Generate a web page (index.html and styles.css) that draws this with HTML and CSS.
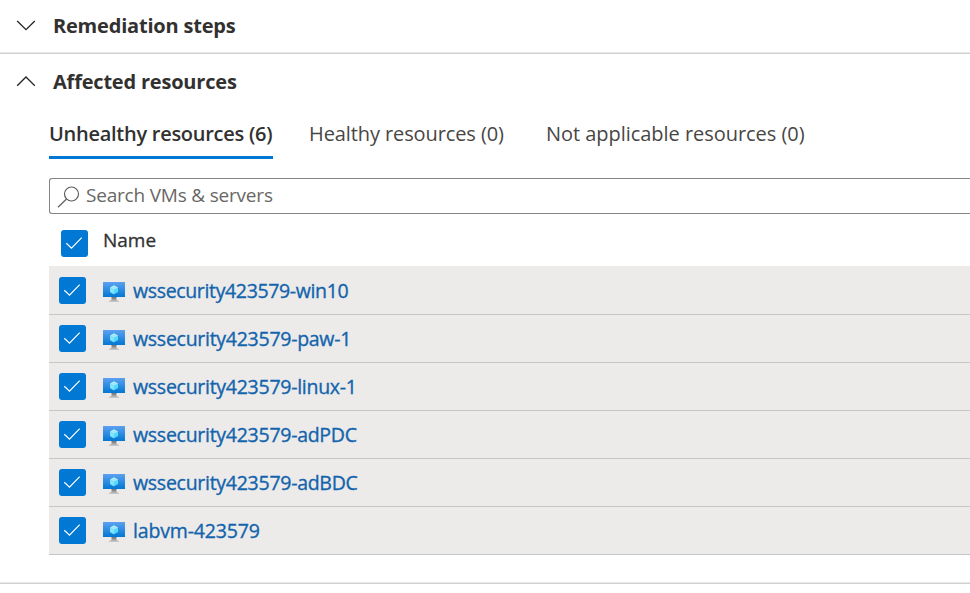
FILE: index.html
```
<!DOCTYPE html>
<html lang="en">
<head>
<meta charset="utf-8">
<title>Affected resources</title>
<link rel="stylesheet" href="styles.css">
</head>
<body>
<svg class="defs" width="0" height="0" aria-hidden="true">
  <defs>
    <linearGradient id="screen" x1="0" y1="0" x2="0" y2="1"><stop offset="0" stop-color="#5ea0ef"/><stop offset="1" stop-color="#0078d4"/></linearGradient>
    <linearGradient id="stand" x1="0" y1="0" x2="0" y2="1"><stop offset="0" stop-color="#707070"/><stop offset="1" stop-color="#cfcfcf"/></linearGradient>
    <symbol id="vm" viewBox="0 0 22 22">
      <rect y="1" width="22" height="15" fill="url(#screen)"/>
      <path d="M8.500 16h5v3l2.700 1.200v.8H5.800v-.8L8.500 19z" fill="url(#stand)"/>
      <path d="M11 4.200l4 2.200v4.500l-4 2.300-4-2.300V6.400z" fill="#50dcfa"/>
      <path d="M11 4.200l4 2.200-4 2.300-4-2.300z" fill="#a5e6fc"/>
      <path d="M7 6.400l4 2.300v4.500l-4-2.300z" fill="#86e0fb"/>
    </symbol>
    <symbol id="check" viewBox="0 0 27 27"><path d="M5.300 13.200l5.200 5L20.700 7.700" fill="none" stroke="#fff" stroke-width="1.200"/></symbol>
  </defs>
</svg>
<section class="section collapsed">
  <h2 class="heading"><svg class="chevron" viewBox="0 0 20 12"><path d="M1.200 1L10 9.700l8.800-8.700"/></svg><span>Remediation steps</span></h2>
</section>
<section class="section expanded">
  <h2 class="heading"><svg class="chevron" viewBox="0 0 20 12"><path d="M1.200 9.700L10 1l8.800 8.700"/></svg><span>Affected resources</span></h2>
  <div class="content">
    <nav class="tabs">
      <span class="tab active">Unhealthy resources (6)</span>
      <span class="tab healthy">Healthy resources (0)</span>
      <span class="tab other">Not applicable resources (0)</span>
    </nav>
    <div class="search"><svg class="lens" viewBox="0 0 24 24"><circle cx="14.500" cy="9" r="7"/><path d="M9.500 14L1 22.300"/></svg><span>Search VMs &amp; servers</span></div>
    <div class="head"><span class="box"><svg><use href="#check"/></svg></span><span class="name">Name</span></div>
    <div class="row first"><span class="box"><svg><use href="#check"/></svg></span><svg class="vm"><use href="#vm"/></svg><a class="link">wssecurity423579-win10</a></div>
    <div class="row"><span class="box"><svg><use href="#check"/></svg></span><svg class="vm"><use href="#vm"/></svg><a class="link">wssecurity423579-paw-1</a></div>
    <div class="row"><span class="box"><svg><use href="#check"/></svg></span><svg class="vm"><use href="#vm"/></svg><a class="link">wssecurity423579-linux-1</a></div>
    <div class="row"><span class="box"><svg><use href="#check"/></svg></span><svg class="vm"><use href="#vm"/></svg><a class="link">wssecurity423579-adPDC</a></div>
    <div class="row"><span class="box"><svg><use href="#check"/></svg></span><svg class="vm"><use href="#vm"/></svg><a class="link">wssecurity423579-adBDC</a></div>
    <div class="row last"><span class="box"><svg><use href="#check"/></svg></span><svg class="vm"><use href="#vm"/></svg><a class="link">labvm-423579</a></div>
  </div>
</section>
</body>
</html>
```
FILE: styles.css
```
* { box-sizing: border-box; }
body { margin: 0; height: 593px; overflow: hidden; background: #fff; color: #323130; font-family: "Open Sans", "Noto Sans", sans-serif; font-size: 19px; line-height: 26px; white-space: nowrap; }
svg { display: block; flex: none; }
.defs { position: absolute; }
.section { border-bottom: 1px solid #d0d0d0; box-shadow: inset 0 -1px #e8e8e8; }
.collapsed { height: 54px; padding-top: 12px; }
.expanded { height: 530px; padding-top: 14px; }
.heading { display: flex; align-items: center; margin: 0; padding-left: 16px; gap: 17px; height: 27px; font-size: 20px; font-weight: 700; letter-spacing: -0.2px; }
.chevron { width: 20px; height: 12px; fill: none; stroke: #252423; stroke-width: 1.3; }
.content { margin-left: 49px; }
.tabs { display: flex; height: 64px; padding-top: 26px; font-size: 20px; letter-spacing: -0.1px; }
.tab { height: 38px; flex: none; color: #484644; }
.active { width: 224px; border-bottom: 3px solid #0078d4; font-weight: 600; letter-spacing: -0.27px; color: #323130; }
.healthy { margin-left: 36px; width: 195px; }
.other { margin-left: 42px; letter-spacing: -0.04px; }
.search { display: flex; height: 36px; margin-top: 19px; padding: 0 0 2px 7px; border: 1px solid #868482; border-right: 0; border-radius: 3px 0 0 3px; align-items: center; color: #696765; letter-spacing: -0.2px; }
.lens { width: 24px; height: 24px; margin: 3px 5px 0 0; fill: none; stroke: #605e5c; stroke-width: 1.2; }
.head { display: flex; height: 52px; padding: 16px 0 0 12px; gap: 15px; }
.name { margin-top: -3px; -webkit-text-stroke: 0.3px; }
.box { width: 27px; height: 27px; border-radius: 3px; background: #0078d4; flex: none; }
.box svg { width: 27px; height: 27px; }
.row { display: flex; align-items: center; height: 48px; padding-left: 10px; border-bottom: 1px solid #c8c6c4; background: #edebe9; }
.first { height: 49px; }
.vm { width: 22px; height: 22px; margin: 3px 8px 0 17px; }
.link { color: #1264ad; font-size: 19.5px; letter-spacing: -0.27px; -webkit-text-stroke: 0.35px; }
.first .link { letter-spacing: -0.35px; padding-top: 2px; }
.last .link { letter-spacing: -0.15px; }
```
